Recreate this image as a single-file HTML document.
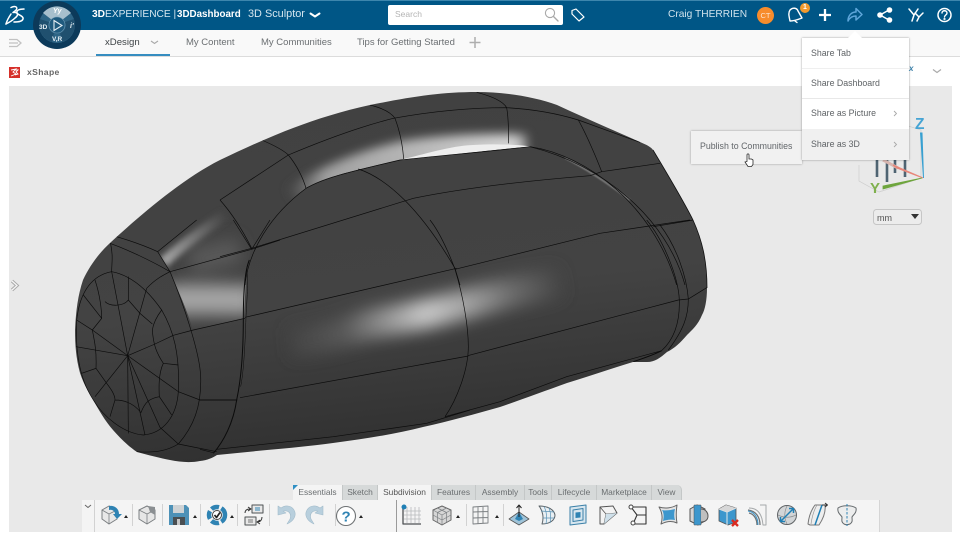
<!DOCTYPE html>
<html><head><meta charset="utf-8"><title>3D Sculptor</title>
<style>
*{box-sizing:border-box}
html,body{margin:0;padding:0;width:960px;height:540px;overflow:hidden;background:#fff;font-family:"Liberation Sans",sans-serif}
.a{position:absolute;white-space:nowrap}
#hdr{left:0;top:0;width:960px;height:30px;background:#005686;border-top:1px solid #3d86ad}
#tabs{left:0;top:30px;width:960px;height:27px;background:#f9f9f9;border-bottom:1px solid #dcdcdc}
.t{font-size:10px;color:#6b6f72;top:36.5px;line-height:12px}
#vp{left:9px;top:86px;width:943px;height:446px;background:#e9e9e9}
.m{left:802px;width:107px;font-size:8.8px;color:#5f6366;line-height:11px}
.tb{top:485px;height:15px;font-size:8.4px;line-height:15px;color:#6a6e70;text-align:center;background:#d6d9d9;border-right:1px solid #c4c7c7}
.tb.on{background:#f4f4f4}
</style></head><body>
<div class="a" id="hdr"></div>
<div class="a" id="tabs"></div>
<div class="a" style="left:96px;top:54px;width:74px;height:2px;background:#368dc0"></div>
<div class="a" id="vp"></div>

<!-- Header text -->
<div class="a" style="left:92px;top:8px;font-size:10.2px;line-height:13px;color:#d5e6ef"><b style="color:#fff">3D</b>EXPERIENCE |</div>
<div class="a" style="left:177px;top:8px;font-size:9.8px;line-height:13px;color:#fff;font-weight:bold">3DDashboard</div>
<div class="a" style="left:248px;top:8px;font-size:10.9px;line-height:13px;color:#d5e6ef">3D Sculptor</div>
<div class="a" style="left:388px;top:5px;width:175px;height:20px;background:#fff;border-radius:2px"></div>
<div class="a" style="left:395px;top:9px;font-size:8.5px;line-height:11px;color:#b4b4b4">Search</div>
<div class="a" style="left:668px;top:9px;font-size:10.2px;line-height:12px;color:#cfe2ec">Craig THERRIEN</div>
<div class="a" style="left:757px;top:7px;width:17px;height:17px;border-radius:50%;background:#f78c2c;color:#fde5d0;font-size:7.5px;line-height:17px;text-align:center">CT</div>
<div class="a" style="left:800px;top:3px;width:10px;height:10px;border-radius:50%;background:#f39a2d;color:#fff;font-size:7px;font-weight:bold;line-height:10px;text-align:center">1</div>

<!-- Tabs -->
<div class="a t" style="left:105px;color:#3f4447;font-size:9.6px">xDesign</div>
<div class="a t" style="left:186px;font-size:9.5px">My Content</div>
<div class="a t" style="left:261px;font-size:9.5px">My Communities</div>
<div class="a t" style="left:357px;font-size:9.5px">Tips for Getting Started</div>
<div class="a" style="left:27px;top:67px;font-size:8.6px;line-height:11px;font-weight:bold;color:#666;letter-spacing:.35px">xShape</div>

<!-- Main SVG -->
<svg class="a" style="left:0;top:0" width="960" height="540" viewBox="0 0 960 540" fill="none">
<defs>
<linearGradient id="bg" gradientUnits="userSpaceOnUse" x1="380" y1="90" x2="420" y2="460"><stop offset="0" stop-color="#414141"/><stop offset=".55" stop-color="#434343"/><stop offset=".8" stop-color="#383838"/><stop offset="1" stop-color="#2e2e2e"/></linearGradient>
<linearGradient id="h1" gradientUnits="userSpaceOnUse" x1="290" y1="340" x2="560" y2="283"><stop offset="0" stop-color="#444"/><stop offset=".2" stop-color="#585858"/><stop offset=".32" stop-color="#868686"/><stop offset=".5" stop-color="#c8c8c8"/><stop offset=".66" stop-color="#a0a0a0"/><stop offset=".82" stop-color="#6c6c6c"/><stop offset="1" stop-color="#454545"/></linearGradient>
<linearGradient id="h2" gradientUnits="userSpaceOnUse" x1="295" y1="190" x2="530" y2="140"><stop offset="0" stop-color="#505050"/><stop offset=".14" stop-color="#a0a0a0"/><stop offset=".6" stop-color="#bcbcbc"/><stop offset=".93" stop-color="#d4d4d4"/><stop offset="1" stop-color="#777"/></linearGradient>
<linearGradient id="h3" gradientUnits="userSpaceOnUse" x1="165" y1="258" x2="225" y2="215"><stop offset="0" stop-color="#a0a0a0"/><stop offset=".6" stop-color="#6a6a6a"/><stop offset="1" stop-color="#444"/></linearGradient>
<filter id="b2" filterUnits="userSpaceOnUse" x="0" y="0" width="960" height="540"><feGaussianBlur stdDeviation="3"/></filter>
<filter id="b3" filterUnits="userSpaceOnUse" x="0" y="0" width="960" height="540"><feGaussianBlur stdDeviation="5"/></filter>
<filter id="b5" filterUnits="userSpaceOnUse" x="0" y="0" width="960" height="540"><feGaussianBlur stdDeviation="8"/></filter>
<filter id="b1" filterUnits="userSpaceOnUse" x="0" y="0" width="960" height="540"><feGaussianBlur stdDeviation=".7"/></filter>
<clipPath id="cl"><path d="M110,243 C135,220 180,180 220,160 C262,140 310,118 370,105 C410,97 440,92 477,92 C505,92 535,97 557,105 C585,118 615,131 640,142 C647,145 651,147 653,150 C668,175 683,200 693,220 C702,240 707,260 707,288 C707,300 705,310 702,315 C698,325 692,330 687,335 C680,343 675,348 667,352 C660,358 655,362 647,362 L633,362 C610,369 590,376 567,383 C545,391 520,400 500,407 C475,414 450,421 423,427 C395,434 365,439 333,443 C310,446 290,448 267,450 L217,455 C212,458 208,460 200,461 C190,463 180,462 170,460 C160,458 148,455 137,452 C128,446 120,438 113,430 C105,421 99,410 93,400 C87,390 83,382 80,373 C76,358 75,345 75,330 C76,310 78,295 83,280 C90,265 100,252 110,243 Z"/></clipPath>
<clipPath id="cl2"><path d="M158,252 L233,190 L300,170 L251,249 C246,270 245,295 244,318 L193,331 C188,312 178,290 170,272 Z"/></clipPath>
</defs>
<path d="M110,243 C135,220 180,180 220,160 C262,140 310,118 370,105 C410,97 440,92 477,92 C505,92 535,97 557,105 C585,118 615,131 640,142 C647,145 651,147 653,150 C668,175 683,200 693,220 C702,240 707,260 707,288 C707,300 705,310 702,315 C698,325 692,330 687,335 C680,343 675,348 667,352 C660,358 655,362 647,362 L633,362 C610,369 590,376 567,383 C545,391 520,400 500,407 C475,414 450,421 423,427 C395,434 365,439 333,443 C310,446 290,448 267,450 L217,455 C212,458 208,460 200,461 C190,463 180,462 170,460 C160,458 148,455 137,452 C128,446 120,438 113,430 C105,421 99,410 93,400 C87,390 83,382 80,373 C76,358 75,345 75,330 C76,310 78,295 83,280 C90,265 100,252 110,243 Z" fill="url(#bg)"/>
<g clip-path="url(#cl)">
<!-- handle highlight -->
<path d="M296,200 C320,182 360,165 403,155 C440,149 480,147 527,148" stroke="url(#h2)" stroke-width="28" filter="url(#b3)"/>
<!-- body overlay -->
<path d="M245,285 C248,252 270,215 306,188 C323,178 343,173 400,160 C450,155 500,149 530,146 C590,160 650,215 677,285 L560,300 Z" fill="url(#bg)"/>
<!-- body highlight -->
<path d="M290,343 C320,340 345,332 367,325 C390,320 410,318 433,312 C460,306 480,300 500,295 C520,290 540,286 560,282" stroke="url(#h1)" stroke-width="30" filter="url(#b5)"/>
<!-- left cap highlights -->
<g clip-path="url(#cl2)">
<path d="M190,262 L240,250" stroke="#585858" stroke-width="26" filter="url(#b5)"/>
<path d="M165,300 C195,298 220,300 255,300" stroke="#a4a4a4" stroke-width="30" filter="url(#b5)"/>
<path d="M163,263 C178,248 200,232 225,215" stroke="url(#h3)" stroke-width="11" filter="url(#b2)"/>
</g>
</g>
<!-- hole -->
<path d="M400,160 C425,154 450,146 473,145 C490,144 510,144 527,146 L531,146.500 C500,149 450,155 400,160 Z" fill="#eeeeee"/>
<!-- thin streak -->
<path d="M565,158 C585,168 610,185 630,200" stroke="#9a9a9a" stroke-width="1.1" filter="url(#b1)"/>
<g clip-path="url(#cl)" stroke="#0b0b0b" stroke-width=".7">
<!-- left cap: zoom5 coords -->
<g transform="translate(60,220) scale(.33333)" stroke-width="2">
<path d="M150,70 C200,88 270,120 330,155 C370,250 420,400 422,470 C425,560 400,620 355,672 C325,690 290,700 230,695"/>
<path d="M170,50 C220,65 260,80 293,95 L330,155"/>
<path d="M152,72 C160,110 155,130 155,155"/>
<path d="M155,155 C210,165 260,205 305,270 C340,330 360,400 355,515 C350,590 310,640 250,645 C190,640 130,590 100,540 C60,480 45,400 50,300 C60,210 100,165 155,155 Z"/>
<path d="M260,205 C285,178 310,165 330,155"/>
<path d="M203,407 L155,155 M203,407 L260,205 M203,407 L285,372 L340,346 L400,330 L555,295 M203,407 L355,515 M203,407 L205,640 M203,407 L255,645 M203,407 L300,622 M203,407 L105,530 M203,407 L48,380 M203,407 L97,330"/>
<path d="M355,515 L420,540 L530,540 M300,622 L355,672 M355,672 L470,695"/>
<path d="M105,180 C120,225 125,270 125,295 L97,330 L50,300 M70,225 L125,295 M97,330 C105,370 110,395 108,445 L65,460 M108,445 L140,490 C155,510 165,525 165,540 L150,590 M165,540 C200,540 225,555 243,578 M243,578 C255,545 270,535 298,530 L335,585 M298,530 C295,480 300,450 310,430 L355,435 M310,430 C290,400 280,375 277,330 C280,310 290,290 305,270 M135,245 C150,260 190,260 205,240 L205,170 M205,240 L240,280 L277,312"/>
<path d="M330,155 L575,88 L660,60 M575,88 L520,0 M575,88 L630,0 M293,95 L410,0"/>
</g>
<!-- top: zoom6 coords -->
<g transform="translate(220,85) scale(.33333)" stroke-width="2">
<path d="M0,345 L205,210 C300,170 420,125 520,100 C640,78 760,68 860,68 C930,72 1010,85 1075,105 L1260,172"/>
<path d="M125,165 C160,180 190,195 205,210 C230,240 250,280 258,310"/>
<path d="M450,60 C490,70 515,85 525,100 C540,140 548,180 551,222"/>
<path d="M770,22 C820,35 850,50 860,68 C866,100 866,140 866,175"/>
<path d="M1075,105 C1100,150 1130,220 1145,260 L1320,235"/>
<path d="M75,600 C85,500 150,390 258,310 C310,280 370,265 540,225 C680,210 800,200 930,185 C1100,210 1300,360 1370,600"/>
<path d="M930,185 C1150,240 1340,400 1395,600"/>
<path d="M0,515 L95,490 L580,340 C750,305 950,285 1110,272 L1145,260"/>
<path d="M95,490 C70,440 40,390 0,345"/>
<path d="M415,252 C500,280 600,370 705,550 L720,600"/>
<path d="M1300,425 L1420,405"/>
</g>
<!-- lower centre: zoom8 coords -->
<g transform="translate(200,260) scale(.33333)" stroke-width="2">
<path d="M135,172 L770,25"/>
<path d="M120,413 L805,288"/>
<path d="M0,420 L112,420"/>
<path d="M148,0 C135,30 130,100 130,175 C130,270 125,350 110,420 C100,490 70,545 40,580" stroke-width="3"/>
<path d="M140,30 C145,60 142,100 138,170 C135,270 130,340 122,380" stroke-width="1.5"/>
<path d="M0,568 L40,578 M50,568 L400,530 L680,490 L810,450"/>
</g>
<!-- right: zoom7 coords -->
<g transform="translate(400,220) scale(.33333)" stroke-width="2">
<path d="M165,148 L600,40 L870,0"/>
<path d="M203,407 L835,240 L865,237 L920,203"/>
<path d="M90,0 C130,50 165,148 165,148 C190,230 205,320 205,380 C205,450 170,540 135,590"/>
<path d="M135,590 L300,545 L500,470 L785,392"/>
<path d="M740,0 C790,60 835,170 838,240 C840,310 820,360 785,392"/>
<path d="M780,15 C830,80 860,170 865,237 C865,290 850,330 805,390"/>
<path d="M700,425 C730,415 760,405 785,392" stroke-width="3"/>
</g>
</g>
<path d="M653,150 C668,175 683,200 693,220 C702,240 707,260 707,288" stroke="#111" stroke-width=".8"/>

<!-- cube axes -->
<g>
<path d="M859,165 V181 L879,192 L921,178 V130 L905,125" stroke="#cdcdcd" stroke-width=".7"/>
<path d="M879,192 L921,178" stroke="#d2d2d2" stroke-width=".7"/>
<path d="M877,160 V177 M887,160 V182 M895,160 V173 M905,160 V177" stroke="#4f6472" stroke-width="2.6"/>
<path d="M883,160 L898,168" stroke="#d9b7b1" stroke-width="3"/>
<path d="M893,165 L923,178 L897,168 Z" stroke="#e7877a" stroke-width="1.2" fill="#e7877a"/>
<path d="M920.5,133 L923.5,178 L922,133 Z" fill="#38a0d1" stroke="#38a0d1" stroke-width="1"/>
<path d="M883,186 L922,178 L883,189 Z" fill="#6ea53d" stroke="#6ea53d" stroke-width=".8"/>
<text x="915" y="129" font-family="'Liberation Sans',sans-serif" font-size="15.5" font-weight="bold" fill="#46a4d4">Z</text>
<text x="870" y="193" font-family="'Liberation Sans',sans-serif" font-size="15" font-weight="bold" fill="#7fb04d">Y</text>
</g>
<rect x="873.5" y="209.5" width="48" height="15" rx="3" fill="#ececec" stroke="#c6c6c6"/>
<text x="877" y="221" font-family="'Liberation Sans',sans-serif" font-size="9" fill="#555">mm</text>
<path d="M911,214 h8 l-4,5 z" fill="#333"/>

<!-- collapse arrow left -->
<path d="M12,281 L17,285.500 L12,290" stroke="#a8a8a8" stroke-width="3.200"/><path d="M12,281 L17,285.500 L12,290" stroke="#f6f6f6" stroke-width="1.300"/>
<!-- hamburger -->
<path d="M9,39.5 h8 l4,3.5 l-4,3.5 h-8 M9,43 h9" stroke="#c2c2c2" stroke-width="1.3"/>
<path d="M151,41 l3.5,2.5 l3.5,-2.5" stroke="#a9a9a9" stroke-width="1.1"/>
<path d="M475,37 v11 M469.5,42.5 h11" stroke="#aeaeae" stroke-width="1.5"/>
<path d="M933,69.5 l4,3 l4,-3" stroke="#aaa" stroke-width="1.2"/>
<!-- xShape icon -->
<rect x="9" y="67" width="11" height="11" fill="#d6302a"/>
<path d="M11,70 l5,-1 l-3,3 l3,2 l-5,2 M15,70 l3,0 l-2,2 l2,2 l-3,1" stroke="#fff" stroke-width=".9"/>
<!-- header icons -->
<g stroke="#fff" stroke-width="1.8" stroke-linecap="round" stroke-linejoin="round">
<path d="M310.5,13.5 l4.5,3 l4.5,-3" stroke-width="2"/>
<circle cx="550" cy="13" r="4.6" stroke="#a9a9a9" stroke-width="1.1"/><path d="M553.5,16.5 L558,21" stroke="#a9a9a9" stroke-width="1.4"/>
<path d="M572,10.5 L576,9 L584,17 L579,21 L572,14 Z" stroke-width="1.2"/>
<path d="M790,10 C793,7 797,8 798,11 L802,18 C797,20 793,21 790,21 C789,16 788,13 790,10 Z M795,21 l2,1.5" stroke-width="1.4"/>
<path d="M825,9 V21 M819,15 H831" stroke-width="2.3" stroke-linecap="butt"/>
<path d="M848,21 C848,15 852,12 856,12 V8.5 L862,14.5 L856,20 V16 C853,16 850,17 848,21 Z" stroke="#5ea6da" stroke-width="1.500" fill="none"/>
<g stroke-width="1.5"><path d="M880,15 L889,10 M880,15 L889,20"/></g>
<circle cx="880" cy="15" r="2.8" fill="#fff" stroke="none"/><circle cx="889.5" cy="10" r="2.8" fill="#fff" stroke="none"/><circle cx="889.5" cy="20" r="2.8" fill="#fff" stroke="none"/>
<path d="M909,9 L914,15 L912,21 M918,9 L914,15 M915,13 L919,17 L917,21 M923,13 L919,17" stroke-width="1.5"/>
<circle cx="944.5" cy="15" r="6.5" stroke-width="1.5"/>
<path d="M942,13 C942,10 947,10 947,13 C947,15 944.5,15 944.5,17" stroke-width="1.4"/><circle cx="944.5" cy="19" r=".7" stroke-width=".8"/>
</g>
<!-- DS logo -->
<g stroke="#fff" stroke-width="1.5" fill="none" stroke-linecap="round" stroke-linejoin="round">
<path d="M11,7.5 C16,5 19,8 15,11 L13,12.5 C18,12 19,15 15,18 C12,21 8,23 6,24"/>
<path d="M6,24 C7,20 9,17 11,14"/>
<path d="M24,9 C20,9 16,10 17,13 C18,15 24,16 23,19 C22,22 17,22 14,22"/>
</g>
<!-- compass -->
<g font-family="'Liberation Sans',sans-serif" font-weight="bold">
<circle cx="57" cy="25" r="24" fill="#0c3a5a"/>
<circle cx="57" cy="25" r="18" fill="#2e6586"/>
<path d="M43,13 A18,18 0 0 1 71,13 L62,20 A8,8 0 0 0 52,20 Z" fill="#a7bfcd"/>
<path d="M40,19 A18,18 0 0 0 52,42 L54,33 A8,8 0 0 1 49,22 Z" fill="#153f5c" opacity=".55"/>
<path d="M74,19 A18,18 0 0 1 62,42 L60,33 A8,8 0 0 0 65,22 Z" fill="#153f5c" opacity=".55"/>
<circle cx="57" cy="25" r="8" fill="#1f5a7e" stroke="#6e9ab5" stroke-width=".6"/>
<path d="M54,20.5 L62,25.5 L54,30.5 Z" fill="none" stroke="#e4eef4" stroke-width="1.1"/>
<text x="39" y="29" font-size="6.5" fill="#e4eef4">3D</text>
<text x="52" y="41" font-size="6.5" fill="#e4eef4">V,R</text>
<text x="53" y="13" font-size="7" font-style="italic" fill="#fff">Yy</text>
<text x="70" y="28" font-size="7" font-style="italic" fill="#e4eef4">i'</text>
</g>
</svg>

<!-- Bottom tabs -->
<div class="a tb on" style="left:293px;width:50px">Essentials</div>
<div class="a" style="left:293px;top:485px;width:0;height:0;border-top:5px solid #2f8fc4;border-right:5px solid transparent"></div>
<div class="a tb" style="left:343px;width:35px">Sketch</div>
<div class="a tb on" style="left:378px;width:54px;color:#555">Subdivision</div>
<div class="a tb" style="left:432px;width:44px">Features</div>
<div class="a tb" style="left:476px;width:49px">Assembly</div>
<div class="a tb" style="left:525px;width:27px">Tools</div>
<div class="a tb" style="left:552px;width:45px">Lifecycle</div>
<div class="a tb" style="left:597px;width:55px">Marketplace</div>
<div class="a tb" style="left:652px;width:30px;border-radius:0 5px 0 0">View</div>
<div class="a" style="left:82px;top:500px;width:798px;height:32px;background:#f4f4f4;border-right:1px solid #d5d5d5"></div>

<svg class="a" style="left:0;top:495px" width="960" height="45" viewBox="0 495 960 45" fill="none" stroke-linejoin="round">
<path d="M94.500,500 V532 M132.500,504 V526 M162.500,504 V526 M200.500,504 V526 M237.500,504 V526 M269.500,504 V526 M335.500,504 V526 M466.500,504 V526 M503.500,504 V526" stroke="#d2d2d2"/>
<path d="M396.500,500 V532" stroke="#9a9a9a"/>
<path d="M85,505 l3,2.500 l3,-2.500" stroke="#666" stroke-width="1"/>
<path d="M124,518 h4 l-2,-3 z M193,518 h4 l-2,-3 z M230,518 h4 l-2,-3 z M359,518 h4 l-2,-3 z M456,518 h4 l-2,-3 z M495,518 h4 l-2,-3 z" fill="#222"/>
<!-- 1 arrow cube -->
<g transform="translate(110,515)"><path d="M-8,-5 L-1,-9 L7,-5 V4 L-1,9 L-8,4 Z" fill="#e8e8e8" stroke="#7b7f82"/><path d="M-8,-5 L-1,-1 V9 M-1,-1 L7,-5" stroke="#7b7f82" stroke-width=".8"/><path d="M-1,-9 C5,-10 9,-6 9,-1 L12,-1 L7,4 L3,-1 L5,-1 C5,-4 2,-6 -1,-5 Z" fill="#2f83b3"/></g>
<!-- 2 cube -->
<g transform="translate(147,515)"><path d="M-8,-5 L0,-9 L8,-5 V4 L0,9 L-8,4 Z" fill="#e6e6e6" stroke="#7b7f82"/><path d="M-8,-5 L0,-1 V9 M0,-1 L8,-5" stroke="#7b7f82" stroke-width=".8"/><path d="M1,-9 L8,-8 V0 L3,-3 Z" fill="#8b8f92"/></g>
<!-- 3 floppy -->
<g transform="translate(179,515)"><path d="M-10,-10 H7 L10,-7 V10 H-10 Z" fill="#4d91b7"/><rect x="-6" y="-10" width="11" height="8" fill="#cfd3d5"/><rect x="-6" y="2" width="12" height="8" fill="#4a4f52"/><rect x="-2" y="4" width="3" height="6" fill="#c7c7c7"/></g>
<!-- 4 gear -->
<g transform="translate(217,515)"><circle r="8" stroke="#2f83b3" stroke-width="4.500" stroke-dasharray="8 2.500"/><circle r="4.500" fill="#fff" stroke="#444"/><path d="M-2.500,0 L-.5,2.500 L3,-2.500" stroke="#222" stroke-width="1.700"/></g>
<!-- 5 files -->
<g transform="translate(254,515)"><rect x="-2" y="-10" width="11" height="8" fill="#e8e8e8" stroke="#4e5254"/><path d="M1,-7 h5 M1,-5 h5" stroke="#2f83b3"/><rect x="-9" y="2" width="11" height="8" fill="#e8e8e8" stroke="#4e5254"/><path d="M-6,5 h5 M-6,7 h5" stroke="#777"/><path d="M-9,-2 C-9,-5 -7,-6 -4,-6 M-6,-8 L-3,-6 L-6,-4 M8,2 C8,5 6,7 4,7 M6,5 L3,7 L6,9" stroke="#333"/></g>
<!-- undo -->
<path d="M278,506 L278,515 L286,513 L283,511 C288,510 292,513 290,519 L287,524 C294,521 297,515 294,510 C291,505 285,505 281,508 Z" fill="#b8cfdd" stroke="#a3bccb" stroke-width=".6"/>
<!-- redo -->
<path d="M323,506 L323,515 L315,513 L318,511 C313,510 309,513 311,519 L314,524 C307,521 304,515 307,510 C310,505 316,505 320,508 Z" fill="#b8cfdd" stroke="#a3bccb" stroke-width=".6"/>
<!-- help -->
<g transform="translate(346,516)"><circle r="9.500" fill="#fff" stroke="#6f7375" stroke-width="1.100"/><text x="-4.500" y="5.500" font-family="'Liberation Sans',sans-serif" font-size="15" font-weight="bold" fill="#2f83b3">?</text></g>
<!-- grid blue -->
<g transform="translate(412,515)"><path d="M-9,-9 V9 H9" stroke="#4e5254" stroke-width="1.300"/><path d="M-5,-8 V8 M-1,-8 V8 M3,-8 V8 M7,-8 V8 M-8,-4 H9 M-8,0 H9 M-8,4 H9" stroke="#b7babc" stroke-width=".8"/><circle cx="-8" cy="-8" r="2.500" fill="#1f7fb5"/></g>
<!-- cube segmented -->
<g transform="translate(442,515)"><path d="M-9,-5 L0,-9 L9,-5 V5 L0,10 L-9,5 Z" fill="#d6d6d6" stroke="#666"/><path d="M-9,-5 L0,0 V10 M0,0 L9,-5 M-4.500,-7 L4.500,-2.500 M4.500,-7 L-4.500,-2.500 M-4.500,-2.500 V7.500 M4.500,-2.500 V7.500 M-9,0 L0,5 L9,0" stroke="#7b7f82" stroke-width=".7"/></g>
<!-- grid -->
<g transform="translate(480,515)" stroke="#7b7f82"><path d="M-7,-8 L8,-9 V8 L-7,9 Z M-2,-8 V9 M3,-8.500 V8.500 M-7,-3 L8,-3.500 M-7,3 L8,2.500" stroke-width=".9"/></g>
<!-- pyramid -->
<g transform="translate(519,515)"><path d="M-10,4 L0,-3 L10,4 L0,10 Z" fill="#9fc3d8" stroke="#555" stroke-width=".8"/><path d="M-4,4 L0,-3 L4,4 L0,6 Z" fill="#2f83b3"/><path d="M0,2 V-10 M-2.500,-7 L0,-10 L2.500,-7" stroke="#222"/></g>
<!-- curved grid -->
<g transform="translate(547,515)"><path d="M-8,-9 C0,-9 7,-6 8,0 C8,5 3,9 -5,9 C-3,3 -4,-4 -8,-9 Z" fill="#e9eff3" stroke="#5b6368"/><path d="M-3,-8.500 C0,-3 0,3 -1,9 M2,-7.500 C4,-2 4,3 3,8 M-6,-4 L7,-3 M-4,3 L7,3" stroke="#5b93b5" stroke-width=".7"/></g>
<!-- square inset -->
<g transform="translate(578,515)"><path d="M-8,-8 L8,-10 V8 L-8,10 Z" fill="#d7e6ef" stroke="#3b80a8"/><path d="M-5,-5 L5,-6.500 V5 L-5,6.500 Z" stroke="#3b80a8"/><path d="M-2.500,-2.500 L2.500,-3 V2.500 L-2.500,3 Z" fill="#2f83b3"/></g>
<!-- chevron surface -->
<g transform="translate(608,515)"><path d="M-8,-8 L5,-9 L9,-2 L-4,9 L-8,9 Z" fill="#f3f3f3" stroke="#555"/><path d="M-8,-8 L-2,-1 L9,-2 M-2,-1 L-4,9" stroke="#555" stroke-width=".8"/><path d="M-2,-1 L9,-2 L-4,9 Z" fill="#cfe0ea"/></g>
<!-- nodes -->
<g transform="translate(638,515)"><path d="M-7,-8 L8,-8 V9 L-5,9 L-1,0 Z M-1,0 H8 M-7,-8 L-1,0" stroke="#333" stroke-width="1.100"/><circle cx="-7" cy="-8" r="2" fill="#fff" stroke="#444"/><circle cx="-5" cy="8" r="2" fill="#fff" stroke="#444"/></g>
<!-- blue patch -->
<g transform="translate(668,515)"><path d="M-9,-8 C-3,-6 4,-7 9,-10 C8,-3 8,3 9,8 C3,5 -3,7 -7,9 C-5,3 -6,-3 -9,-8 Z" fill="#e3e3e3" stroke="#666"/><path d="M-6,-5 C-2,-4 3,-5 7,-6 C6,-2 6,2 7,5 C2,4 -2,5 -5,6 C-4,2 -4,-2 -6,-5 Z" fill="#3d97cd"/></g>
<!-- cube cylinder -->
<g transform="translate(698,515)"><path d="M-8,-6 L-1,-10 L7,-6 V6 L0,10 L-8,6 Z" fill="#d5d5d5" stroke="#555"/><rect x="-4" y="-10" width="7" height="20" fill="#3d97cd" stroke="#555" stroke-width=".5"/><path d="M3,-6 C8,-6 10,-2 10,1 C10,5 7,7 3,7" fill="#bfbfbf" stroke="#555"/></g>
<!-- cube delete -->
<g transform="translate(728,515)"><path d="M-9,-6 L-2,-10 L8,-7 V7 L0,10 L-9,6 Z" fill="#3d97cd" stroke="#555" stroke-width=".8"/><path d="M-9,-6 L-1,-3 V10 M-1,-3 L8,-7" stroke="#e8e8e8"/><path d="M-9,-6 L-2,-10 L8,-7 L-1,-3 Z" fill="#d7d7d7"/><path d="M4,5 L10,11 M10,5 L4,11" stroke="#d92b20" stroke-width="2.300"/></g>
<!-- curved strips -->
<g transform="translate(757,515)"><path d="M-8,-7 C0,-7 5,-2 6,10 H9 V-10 H3" stroke="#a5a8aa"/><path d="M-9,-5 C-1,-4 3,2 3,10 M-8,-2 C-3,-1 0,4 0,10" stroke="#6f7375" stroke-width="1.300"/><path d="M-9,-4 C-2,-3 1,3 1,10" stroke="#3d97cd"/></g>
<!-- sphere -->
<g transform="translate(787,515)"><circle r="9.500" fill="#d2d5d7" stroke="#5f6366"/><path d="M-9,0 C-3,3 3,3 9,0 M0,-9 C-3,-3 -3,3 0,9" stroke="#8b8f92" stroke-width=".7"/><path d="M-6,6 L6,-6 M2,-6.500 H6.500 V-2 M-6.500,2 V6.500 H-2" stroke="#1f7fb5" stroke-width="1.500"/></g>
<!-- sheared -->
<g transform="translate(817,515)"><path d="M-9,9 C-8,0 -5,-6 -2,-10 H8 C9,-3 6,4 2,10 H-7 Z" fill="#eee" stroke="#777"/><path d="M-2,10 L5,-10" stroke="#1f7fb5" stroke-width="1.500"/><path d="M-6,9 C-5,2 -3,-5 0,-10" stroke="#999" stroke-width=".7"/><path d="M5,-10 H10 M8,-12 L10.500,-10 L8,-8" stroke="#333"/></g>
<!-- mirror -->
<g transform="translate(847,515)"><path d="M-9,-7 C-5,-10 5,-10 9,-7 C10,-2 6,0 5,2 C5,5 6,7 3,9 C0,10 -1,10 -3,9 C-6,7 -5,5 -5,2 C-6,0 -10,-2 -9,-7 Z" fill="#eceded" stroke="#656a6d"/><path d="M0,-11 V11" stroke="#2f83b3" stroke-dasharray="2.500 1.500"/></g>
</svg>

<!-- Share menu -->
<div class="a" style="left:691px;top:131px;width:111px;height:32.500px;background:#f1f1f1;box-shadow:0 0 2px rgba(0,0,0,.35)"></div>
<div class="a" style="left:700px;top:140.500px;font-size:8.800px;line-height:11px;color:#62666a">Publish to Communities</div>
<div class="a" style="left:802px;top:38px;width:107px;height:122px;background:#fff;box-shadow:0 0 2px rgba(0,0,0,.4)"></div>
<div class="a" style="left:802px;top:129px;width:107px;height:31px;background:#f0f0f0"></div>
<div class="a" style="left:802px;top:68px;width:107px;height:1px;background:#efefef"></div>
<div class="a" style="left:802px;top:98px;width:107px;height:1px;background:#e8e8e8"></div>
<div class="a m" style="top:47.500px;padding-left:9px">Share Tab</div>
<div class="a m" style="top:77.500px;padding-left:9px">Share Dashboard</div>
<div class="a m" style="top:108px;padding-left:9px">Share as Picture</div>
<div class="a m" style="top:138.500px;padding-left:9px">Share as 3D</div>
<svg class="a" style="left:0;top:0" width="960" height="200" viewBox="0 0 960 200" fill="none">
<path d="M848,38 L855,31 L862,38 Z" fill="#fff"/>
<path d="M894,111 l2.500,2.500 l-2.500,2.500 M894,142 l2.500,2.500 l-2.500,2.500" stroke="#a9a9a9" stroke-width=".9"/>
<path d="M747,155 C747,153.500 749,153.500 749,155 V159 H751.500 L753,160 V164.500 L751.500,166.500 H748 L745,162 L747,161.500 Z" fill="#fff" stroke="#2a2a2a" stroke-width=".8"/>
</svg>
<div class="a" style="left:909px;top:65px;font-size:8px;line-height:8px;font-style:italic;font-weight:bold;color:#3a7fa8">x</div>
</body></html>
